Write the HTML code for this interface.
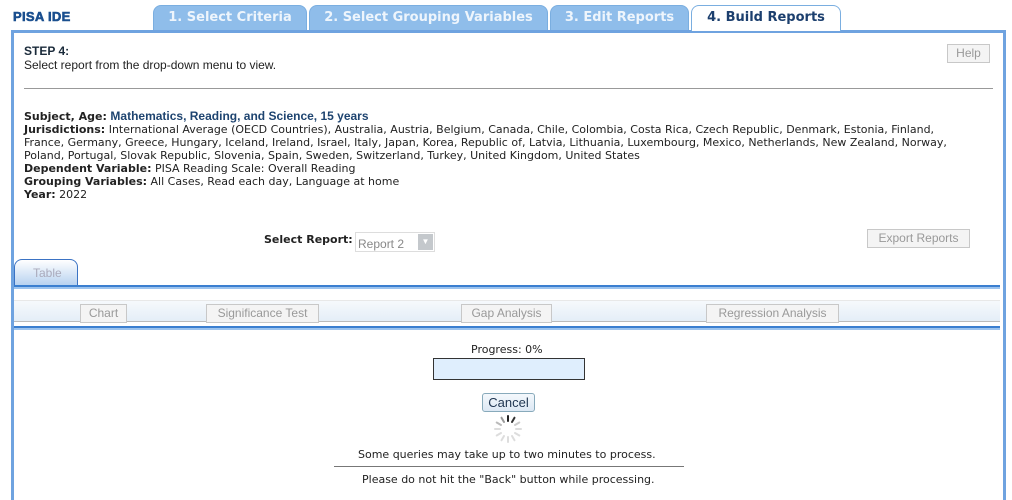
<!DOCTYPE html>
<html><head><meta charset="utf-8"><style>
*{margin:0;padding:0;box-sizing:border-box}
body{width:1012px;height:500px;overflow:hidden;background:#fff;position:relative;font-family:"DejaVu Sans",Verdana,sans-serif;font-size:11px;color:#222}
.a{position:absolute;white-space:nowrap}
.tab{position:absolute;top:5px;height:25px;background:#8fbdea;border:1px solid #7aaee0;border-bottom:none;border-radius:8px 8px 0 0;color:#eef5fc;font-weight:bold;font-size:13px;text-align:center;line-height:24px}
.btn{position:absolute;border:1px solid #c8c8c8;background:#f4f4f4;color:#999;font-family:"Liberation Sans",Arial,sans-serif;font-size:12px;text-align:center;line-height:17px;height:19px}
.info{position:absolute;left:24px;top:110px;line-height:13px;font-size:11px}
.info div{white-space:nowrap}
b{font-weight:bold;color:#222}
</style></head><body>
<div class="a" style="left:13px;top:9px;font-family:'Liberation Sans',Arial,sans-serif;font-weight:900;font-size:13px;color:#1a4f8f;letter-spacing:0.3px;-webkit-text-stroke:0.6px #1a4f8f">PISA IDE</div>
<div class="tab" style="left:153px;width:154px">1. Select Criteria</div>
<div class="tab" style="left:309px;width:239px">2. Select Grouping Variables</div>
<div class="tab" style="left:550px;width:139px">3. Edit Reports</div>
<div class="tab" style="left:691px;width:150px;background:#fff;color:#1c3f6e;height:26px;z-index:2">4. Build Reports</div>
<div class="a" style="left:11px;top:30px;width:995px;height:470px;border:3px solid #6fa3e0;border-bottom:none"></div>
<div class="a" style="left:24px;top:44px;font-family:'Liberation Sans',Arial,sans-serif;font-size:12px;line-height:14px;color:#222"><b style="color:#1a2a3a">STEP 4:</b><br>Select report from the drop-down menu to view.</div>
<div class="btn" style="left:947px;top:44px;width:43px">Help</div>
<div class="a" style="left:24px;top:88px;width:969px;height:1px;background:#999"></div>
<div class="info">
<div><b>Subject, Age:</b> <span style="font-family:'Liberation Sans',Arial,sans-serif;font-weight:bold;font-size:12px;color:#1e4470">Mathematics, Reading, and Science, 15 years</span></div>
<div><b>Jurisdictions:</b> International Average (OECD Countries), Australia, Austria, Belgium, Canada, Chile, Colombia, Costa Rica, Czech Republic, Denmark, Estonia, Finland,</div>
<div>France, Germany, Greece, Hungary, Iceland, Ireland, Israel, Italy, Japan, Korea, Republic of, Latvia, Lithuania, Luxembourg, Mexico, Netherlands, New Zealand, Norway,</div>
<div>Poland, Portugal, Slovak Republic, Slovenia, Spain, Sweden, Switzerland, Turkey, United Kingdom, United States</div>
<div><b>Dependent Variable:</b> PISA Reading Scale: Overall Reading</div>
<div><b>Grouping Variables:</b> All Cases, Read each day, Language at home</div>
<div><b>Year:</b> 2022</div>
</div>
<div class="a" style="left:264px;top:233px;font-weight:bold;font-size:11px">Select Report:</div>
<div class="a" style="left:355px;top:232px;width:80px;height:20px;border:1px solid #ddd;font-family:'Liberation Sans',Arial,sans-serif;font-size:12px;color:#888;padding:4px 0 0 2px">Report 2<div class="a" style="right:1px;top:1px;width:15px;height:16px;background:#c4c8cc;color:#fff;font-size:8px;text-align:center;line-height:16px">▼</div></div>
<div class="btn" style="left:867px;top:229px;width:103px">Export Reports</div>
<div class="a" style="left:14px;top:259px;width:64px;height:26px;border:1px solid #3b73c4;border-bottom:none;border-radius:8px 8px 0 0;background:linear-gradient(#fff,#b8d2f0);color:#aab;font-family:'Liberation Sans',Arial,sans-serif;font-size:12px;padding:6px 0 0 18px">Table</div>
<div class="a" style="left:14px;top:285px;width:986px;height:2px;background:#3b7fd0"></div>
<div class="a" style="left:14px;top:287px;width:986px;height:2px;background:#9cc3ee"></div>
<div class="a" style="left:14px;top:300px;width:986px;height:22px;background:linear-gradient(#f6f9fc,#e4eef7);border-top:1px solid #e8e8e8;border-bottom:1px solid #bbb"></div>
<div class="btn" style="left:80px;top:304px;width:47px">Chart</div>
<div class="btn" style="left:206px;top:304px;width:113px">Significance Test</div>
<div class="btn" style="left:461px;top:304px;width:91px">Gap Analysis</div>
<div class="btn" style="left:706px;top:304px;width:133px">Regression Analysis</div>
<div class="a" style="left:14px;top:326px;width:986px;height:2px;background:#3b7fd0"></div>
<div class="a" style="left:14px;top:328px;width:986px;height:2px;background:#9cc3ee"></div>
<div class="a" style="left:471px;top:343px;font-size:11px">Progress: 0%</div>
<div class="a" style="left:433px;top:358px;width:152px;height:22px;border:1px solid #333;background:#dfeefd"></div>
<div class="a" style="left:482px;top:393px;width:53px;height:19px;border:1px solid #8ab;border-radius:3px;background:linear-gradient(#f4f8fc,#dce8f4);font-family:'Liberation Sans',Arial,sans-serif;font-size:13px;color:#1e3450;text-align:center;line-height:17px">Cancel</div>
<svg class="a" style="left:492px;top:413px" width="32" height="32" viewBox="0 0 32 32">
<g stroke-width="2" stroke-linecap="round">
<line x1="16" y1="3" x2="16" y2="8" stroke="#222"/>
<line x1="22.5" y1="4.7" x2="20" y2="9" stroke="#333"/>
<line x1="27.3" y1="9.5" x2="23" y2="12" stroke="#ccc"/>
<line x1="29" y1="16" x2="24" y2="16" stroke="#ddd"/>
<line x1="27.3" y1="22.5" x2="23" y2="20" stroke="#ddd"/>
<line x1="22.5" y1="27.3" x2="20" y2="23" stroke="#ddd"/>
<line x1="16" y1="29" x2="16" y2="24" stroke="#ddd"/>
<line x1="9.5" y1="27.3" x2="12" y2="23" stroke="#ddd"/>
<line x1="4.7" y1="22.5" x2="9" y2="20" stroke="#ddd"/>
<line x1="3" y1="16" x2="8" y2="16" stroke="#ddd"/>
<line x1="4.7" y1="9.5" x2="9" y2="12" stroke="#bbb"/>
<line x1="9.5" y1="4.7" x2="12" y2="9" stroke="#999"/>
</g></svg>
<div class="a" style="left:358px;top:448px;font-size:11px">Some queries may take up to two minutes to process.</div>
<div class="a" style="left:334px;top:466px;width:350px;height:1px;background:#777"></div>
<div class="a" style="left:362px;top:473px;font-size:11px">Please do not hit the "Back" button while processing.</div>
</body></html>
